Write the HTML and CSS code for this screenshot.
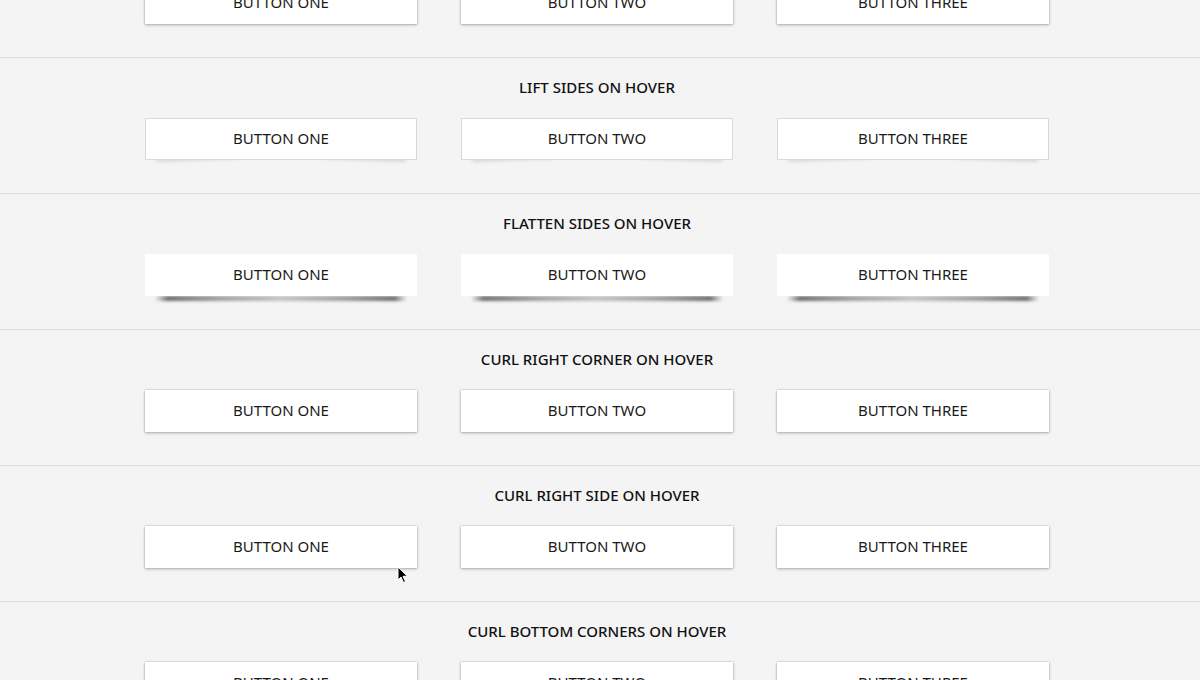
FILE: index.html
```html
<!DOCTYPE html>
<html>
<head>
<meta charset="utf-8">
<link rel="stylesheet" href="styles.css">
</head>
<body>
<main class="page">
  <section class="demo">
    <h2 class="demo-title">RAISE ON HOVER</h2>
    <div class="row">
      <div class="btn btn-shadow">BUTTON ONE</div>
      <div class="btn btn-shadow">BUTTON TWO</div>
      <div class="btn btn-shadow">BUTTON THREE</div>
    </div>
  </section>
  <section class="demo">
    <h2 class="demo-title">LIFT SIDES ON HOVER</h2>
    <div class="row">
      <div class="btn btn-lift">BUTTON ONE</div>
      <div class="btn btn-lift">BUTTON TWO</div>
      <div class="btn btn-lift">BUTTON THREE</div>
    </div>
  </section>
  <section class="demo">
    <h2 class="demo-title">FLATTEN SIDES ON HOVER</h2>
    <div class="row">
      <div class="btn btn-flatten">BUTTON ONE</div>
      <div class="btn btn-flatten">BUTTON TWO</div>
      <div class="btn btn-flatten">BUTTON THREE</div>
    </div>
  </section>
  <section class="demo">
    <h2 class="demo-title">CURL RIGHT CORNER ON HOVER</h2>
    <div class="row">
      <div class="btn btn-shadow">BUTTON ONE</div>
      <div class="btn btn-shadow">BUTTON TWO</div>
      <div class="btn btn-shadow">BUTTON THREE</div>
    </div>
  </section>
  <section class="demo">
    <h2 class="demo-title">CURL RIGHT SIDE ON HOVER</h2>
    <div class="row">
      <div class="btn btn-shadow">BUTTON ONE</div>
      <div class="btn btn-shadow">BUTTON TWO</div>
      <div class="btn btn-shadow">BUTTON THREE</div>
    </div>
  </section>
  <section class="demo">
    <h2 class="demo-title">CURL BOTTOM CORNERS ON HOVER</h2>
    <div class="row">
      <div class="btn btn-shadow">BUTTON ONE</div>
      <div class="btn btn-shadow">BUTTON TWO</div>
      <div class="btn btn-shadow">BUTTON THREE</div>
    </div>
  </section>
</main>
<svg class="cursor" width="12" height="18" viewBox="0 0 12 18">
  <path d="M1 1 L1 14 L4 11 L6.5 16.5 L8.5 15.6 L6 10.3 L10.5 10.3 Z" fill="#000" stroke="#fff" stroke-width="1"/>
</svg>
</body>
</html>
```

FILE: styles.css
```css
html, body {
  margin: 0;
  padding: 0;
}
body {
  background: #f4f4f4;
  font-family: "Noto Sans", "Liberation Sans", sans-serif;
  color: #1e1e1e;
  overflow: hidden;
  height: 680px;
}
.page {
  margin-top: -79px;
}
.demo {
  border-top: 1px solid #dadada;
  padding: 19px 6px 33px 0;
}
.demo-title {
  margin: 0 0 21px;
  font-size: 15px;
  line-height: 20px;
  font-weight: 500;
  text-align: center;
  color: #111;
}
.row {
  display: flex;
  justify-content: center;
  gap: 44px;
}
.btn {
  position: relative;
  box-sizing: border-box;
  width: 272px;
  height: 42px;
  background: #fff;
  display: flex;
  align-items: center;
  justify-content: center;
  padding-bottom: 2px;
  font-size: 15px;
  color: #1a1a1a;
}
.btn-shadow {
  box-shadow: 0 0 1px rgba(0,0,0,0.35), 0 1px 3px rgba(0,0,0,0.28);
}
.btn-lift {
  border: 1px solid #d9d9d9;
}
.btn-lift::before,
.btn-lift::after {
  content: "";
  position: absolute;
  z-index: -1;
  bottom: 2px;
  width: 30%;
  height: 8px;
  box-shadow: 0 3px 4px rgba(0,0,0,0.14);
}
.btn-lift::before {
  left: 10px;
  transform: rotate(-2deg);
}
.btn-lift::after {
  right: 10px;
  transform: rotate(2deg);
}
.btn-flatten::after {
  content: "";
  position: absolute;
  z-index: -1;
  top: 100%;
  left: 10px;
  right: 10px;
  height: 5px;
  background: linear-gradient(to right,
    rgba(0,0,0,0) 0%,
    rgba(0,0,0,0.55) 5%,
    rgba(0,0,0,0.35) 25%,
    rgba(0,0,0,0.2) 50%,
    rgba(0,0,0,0.35) 75%,
    rgba(0,0,0,0.55) 95%,
    rgba(0,0,0,0) 100%);
  filter: blur(1.5px);
}
.cursor {
  position: absolute;
  left: 397px;
  top: 566px;
}
```
